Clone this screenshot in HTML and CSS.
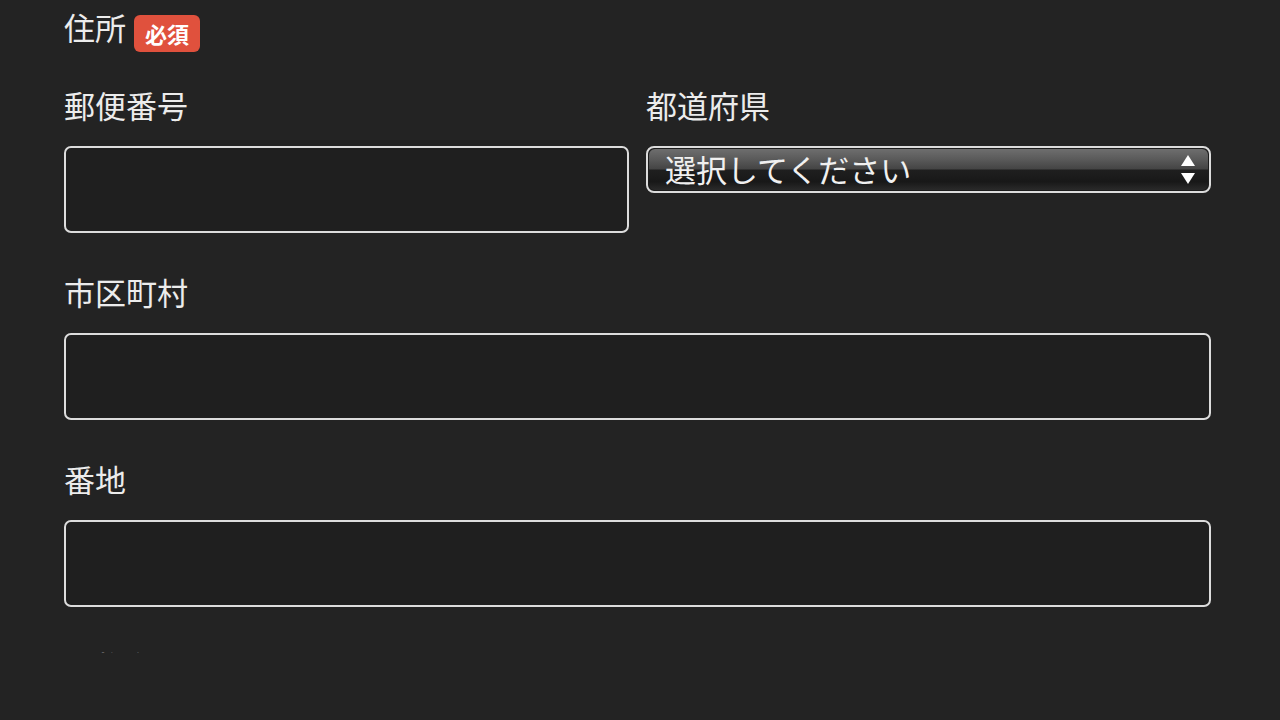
FILE: index.html
```html
<!doctype html>
<html lang="ja">
<head>
  <meta charset="UTF-8">
  <meta name="viewport" content="width=device-width, initial-scale=1.0">
  <title>住所入力</title>
  <link rel="stylesheet" href="styles.css">
</head>
<body>
  <form class="form">
    <div class="section-title">
      <span class="label">住所</span>
      <span class="badge">必須</span>
    </div>

    <div class="row">
      <div class="field">
        <label class="label" for="zip">郵便番号</label>
        <input class="text-input" type="text" id="zip" name="zip">
      </div>
      <div class="field">
        <label class="label" for="pref">都道府県</label>
        <div class="select" id="pref">
          <div class="select-gloss">
            <span class="select-text">選択してください</span>
            <svg class="select-arrows" width="16" height="30" viewBox="0 0 16 30">
              <polygon points="8,0 15,11 1,11" fill="#fff"/>
              <polygon points="1,18 15,18 8,29" fill="#fff"/>
            </svg>
          </div>
        </div>
      </div>
    </div>

    <div class="field">
      <label class="label" for="city">市区町村</label>
      <input class="text-input" type="text" id="city" name="city">
    </div>

    <div class="field">
      <label class="label" for="street">番地</label>
      <input class="text-input" type="text" id="street" name="street">
    </div>

    <div class="field">
      <label class="label" for="building">建物名・部屋番号</label>
    </div>
  </form>
</body>
</html>
```

FILE: styles.css
```css
body {
  margin: 0;
  background: #232323;
  color: #ececec;
  font-family: "Noto Sans CJK JP", "Noto Sans", sans-serif;
}

.form {
  box-sizing: border-box;
  height: 653px;
  overflow: hidden;
  padding: 7px 69px 0 64px;
}

.label {
  display: block;
  font-size: 31px;
  line-height: 40px;
  margin-bottom: 21px;
}

.section-title {
  display: flex;
  align-items: flex-start;
  margin-bottom: 33px;
}

.section-title .label {
  margin-bottom: 0;
}

.badge {
  margin: 8px 0 0 8px;
  padding: 0 11px;
  height: 37px;
  line-height: 37px;
  border-radius: 6px;
  background: #e0513d;
  color: #fff;
  font-size: 22px;
  font-weight: bold;
}

.row {
  display: grid;
  grid-template-columns: 1fr 1fr;
  column-gap: 17px;
}

.field {
  margin-bottom: 39px;
}

.text-input {
  display: block;
  box-sizing: border-box;
  width: 100%;
  height: 87px;
  margin: 0;
  border: 2px solid #dcdcdc;
  border-radius: 7px;
  background: #1f1f1f;
  color: #eee;
  font-size: 28px;
  padding: 0 16px;
}

.select {
  box-sizing: border-box;
  height: 47px;
  border: 2px solid #dcdcdc;
  border-radius: 8px;
  padding: 1px;
  background: #1c1c1c;
}

.select-gloss {
  display: flex;
  align-items: center;
  justify-content: space-between;
  height: 100%;
  padding: 0 12px 0 16px;
  border-radius: 6px;
  background: linear-gradient(#6e6e6e 0%, #5a5a5a 25%, #444 49%, #1f1f1f 51%, #181818 80%, #2a2a2a 100%);
  box-sizing: border-box;
}

.select-text {
  font-size: 31px;
  line-height: 40px;
  color: #f0f0f0;
  margin-top: -1px;
}

.select-arrows {
  display: block;
  margin-top: 1px;
}
```
